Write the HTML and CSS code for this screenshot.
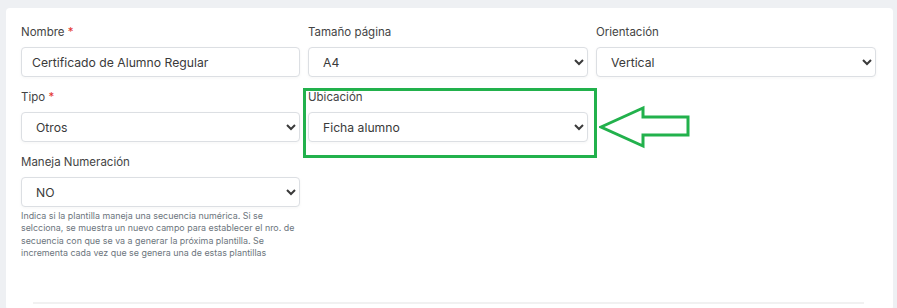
FILE: index.html
```html
<!DOCTYPE html>
<html lang="es">

<head>
  <meta charset="UTF-8" />
  <meta name="viewport" content="width=device-width, initial-scale=1.0" />
  <title>Plantilla</title>
  <link rel="stylesheet" href="styles.css">
</head>

<body>
  <div class="card">
    <form class="template_form">
      <div class="field">
        <label for="nombre">Nombre <span class="req">*</span></label>
        <input class="input_field" type="text" id="nombre" value="Certificado de Alumno Regular" />
      </div>

      <div class="field">
        <label for="tamano">Tamaño página</label>
        <select class="select_field" id="tamano">
          <option>A4</option>
          <option>Carta</option>
        </select>
      </div>

      <div class="field">
        <label for="orientacion">Orientación</label>
        <select class="select_field" id="orientacion">
          <option>Vertical</option>
          <option>Horizontal</option>
        </select>
      </div>

      <div class="field">
        <label for="tipo">Tipo <span class="req">*</span></label>
        <select class="select_field" id="tipo">
          <option>Otros</option>
        </select>
      </div>

      <div class="field marked">
        <label for="ubicacion">Ubicación</label>
        <select class="select_field" id="ubicacion">
          <option>Ficha alumno</option>
        </select>
        <!-- green highlight drawn over the screenshot -->
        <div class="highlight"></div>
        <svg class="arrow" width="94" height="46" viewBox="0 0 94 46">
          <polygon points="2,22 44,3 44,12 89,12 89,30 44,30 44,41" fill="none" stroke="#22b14c" stroke-width="3" />
        </svg>
      </div>

      <div class="field empty"></div>

      <div class="field">
        <label for="numeracion">Maneja Numeración</label>
        <select class="select_field" id="numeracion">
          <option>NO</option>
          <option>SI</option>
        </select>
        <small class="help">Indica si la plantilla maneja una secuencia numérica. Si se selcciona, se muestra un nuevo campo para establecer el nro. de secuencia con que se va a generar la próxima plantilla. Se incrementa cada vez que se genera una de estas plantillas</small>
      </div>
    </form>

    <hr class="divider" />
  </div>
</body>

</html>
```

FILE: styles.css
```css
body {
  margin: 0;
  padding: 8px 4px 0 6px;
  background-color: #eef0f3;
  font-family: "Inter", "Open Sans", sans-serif;
  color: #444;
}

.card {
  background-color: #fff;
  border-radius: 4px;
  padding: 16px 17px 6px 15px;
  min-height: 300px;
  box-sizing: border-box;
}

.template_form {
  display: grid;
  grid-template-columns: 279px 280px 280px;
  column-gap: 8px;
  row-gap: 12px;
}

.field {
  display: flex;
  flex-direction: column;
}

.field label {
  font-size: 11.5px;
  line-height: 16px;
  margin-bottom: 7px;
  color: #444;
}

.req {
  color: #e3342f;
}

.select_field,
.input_field {
  width: 100%;
  height: 30px;
  box-sizing: border-box;
  border: 1px solid #dcdfe3;
  border-radius: 4px;
  background-color: #fff;
  box-shadow: 0px 1px 3px 0px rgba(136, 136, 136, 0.08);
  font-family: inherit;
  font-size: 12.2px;
  color: #3a3a3a;
  outline: none;
}

.input_field {
  padding: 0 10px;
}

.select_field {
  padding: 0 6px 0 10px;
}

.help {
  margin-top: 3px;
  padding-right: 4px;
  font-size: 8.9px;
  line-height: 12.3px;
  color: #6c757d;
}

.marked {
  position: relative;
}

.highlight {
  position: absolute;
  top: -1px;
  left: -5px;
  right: -9px;
  bottom: -16px;
  border: 3px solid #22b14c;
}

.arrow {
  position: absolute;
  left: 291px;
  top: 16px;
}

.divider {
  border: none;
  border-top: 2px solid #f1f1f1;
  margin: 43px 12px 0 12px;
}
```
